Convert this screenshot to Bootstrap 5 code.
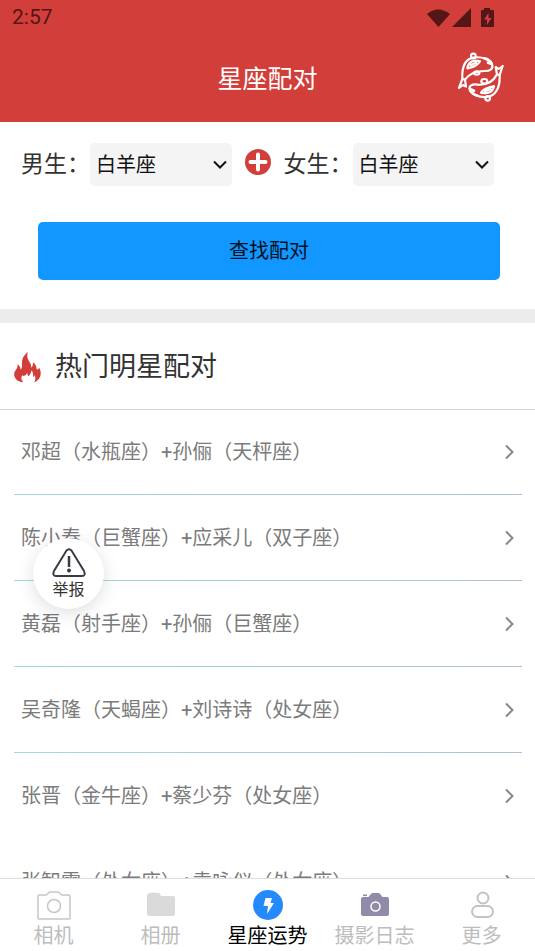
<!DOCTYPE html>
<html lang="zh-CN">
<head>
<meta charset="utf-8">
<meta name="viewport" content="width=device-width, initial-scale=1">
<title>星座配对</title>
<link href="https://cdn.jsdelivr.net/npm/bootstrap@5.3.0/dist/css/bootstrap.min.css" rel="stylesheet">
<style>
body { font-family: Roboto, "Noto Sans CJK SC", sans-serif; color: #333; background: #fff; }
.app-head { background: #d23e39; color: #fff; }
.status-bar { height: 36px; padding: 0 40px 0 12px; color: #541616; font-size: 21px; font-weight: 400; }
.title-bar { height: 86px; }
.title-bar h1 { font-size: 25px; font-weight: 400; line-height: 36px; padding-top: 2px; }
.sign-link { right: 31px; top: 16px; }
.match-form { padding: 21px 41px 29px 21px; }
.match-form label { font-size: 23px; line-height: 42px; padding-top: 1px; }
.sign-select { min-width: 0; height: 43px; padding: 0 32px 0 6px; border: 0; border-radius: 5px; font-size: 20px; line-height: 42px; color: #111; background-color: #f4f4f4; background-size: 14px 9px; background-position: right 5px center;
  background-image: url("data:image/svg+xml,%3Csvg xmlns='http://www.w3.org/2000/svg' viewBox='0 0 14 9'%3E%3Cpath d='M1 1.5l6 6 6-6' fill='none' stroke='%23111' stroke-width='2'/%3E%3C/svg%3E"); }
.plus-gap { margin: 0 13px; padding-bottom: 6px; }
.find-btn { margin: 36px -6px 0 17px; height: 58px; border: 0; border-radius: 5px; font-size: 20px; background: #1296ff; color: #001222; }
.divider-band { height: 14px; background: #ececec; }
.hot-head { height: 87px; padding: 2px 14px 0; gap: 14px; border-bottom: 1px solid #d4d4d4; }
.hot-head h2 { font-size: 27px; font-weight: 400; padding-top: 1px; }
.pair-list { margin-top: -1px; }
.pair-item { height: 86px; margin: 0 13px 0 14px; padding: 0 8px 0 7px; color: #7b7b7b; font-size: 20px; border-bottom: 1px solid; border-image: linear-gradient(90deg, #a3d9dc, #aebfd6) 1; }
.pair-item.plain { border-image: none; border-color: transparent; }
.report-btn { left: 33px; top: 538px; width: 71px; height: 71px; padding: 2px 0 0; border: 0; background: #fff; color: #333; font-size: 16px; line-height: 24px; box-shadow: 0 4px 18px rgba(0,0,0,.13); }
.tab-bar { height: 73px; border-top: 1px solid #ddd; background: #fff; }
.tab-bar a { color: #bdbdbd; font-size: 20px; line-height: 30px; padding-top: 10px; }
.tab-bar a.active { color: #000; }
.tab-bar svg { height: 32px; }
</style>
</head>
<body class="vh-100 d-flex flex-column overflow-hidden">
<header class="app-head flex-shrink-0">
  <div class="status-bar d-flex align-items-center justify-content-between">
    <span>2:57</span>
    <svg width="68" height="20" viewBox="0 0 68 20" fill="currentColor" aria-hidden="true">
      <path d="M0 6Q11-3 23 6L11.500 19ZM44 0V19H25ZM57 2v-2h6v2h3q1 0 1 1v15q0 1-1 1H55q-1 0-1-1V3q0-1 1-1z"/>
      <path d="M61.500 5L57 11.500h3V17l4.500-7h-3z" fill="#d23e39"/>
    </svg>
  </div>
  <div class="title-bar position-relative d-flex align-items-center justify-content-center">
    <h1 class="m-0">星座配对</h1>
    <a href="#" class="sign-link position-absolute" aria-label="双鱼座">
      <svg class="d-block" width="47" height="50" viewBox="50 36 141 150" fill="none" stroke="#fff" stroke-width="6.500" stroke-linejoin="round" stroke-linecap="round">
        <path d="M66 117C64 78 77 55 103 52C126 50 151 58 155 72C160 88 148 94 130 93C108 94 88 99 74 119L77 140L68 135L56 144Z"/>
        <path d="M66 117L74 119M81 85C84 64 101 58 119 64C112 77 99 80 81 85ZM91 75L107 68"/>
        <path d="M132 55Q148 58 154 72L143 68" stroke-width="8"/>
        <circle cx="99" cy="48" r="7"/><ellipse cx="109" cy="99" rx="8" ry="5"/>
        <path d="M178 105C180 142 166 168 140 171C116 174 92 162 88 149C85 138 95 131 112 134C140 136 159 125 170 103L166 81L175 87L187 78Z"/>
        <path d="M178 105L170 103M161 138C158 157 142 163 122 158C130 144 143 144 161 138ZM151 147L134 154"/>
        <path d="M111 167Q93 161 89 147L101 152" stroke-width="8"/>
        <circle cx="142" cy="175" r="7"/><ellipse cx="132" cy="124" rx="9" ry="7"/>
      </svg>
    </a>
  </div>
</header>

<main class="flex-fill overflow-hidden">
  <form class="match-form">
    <div class="d-flex align-items-center">
      <label class="text-nowrap" for="male">男生：</label>
      <select id="male" class="form-select sign-select"><option>白羊座</option></select>
      <svg class="plus-gap flex-shrink-0" width="26" height="32" viewBox="0 0 26 26" aria-hidden="true"><circle cx="13" cy="13" r="13" fill="#d23e39"/><path d="M13 5.500v15M5.500 13h15" stroke="#fff" stroke-width="4" stroke-linecap="round"/></svg>
      <label class="text-nowrap" for="female">女生：</label>
      <select id="female" class="form-select sign-select"><option>白羊座</option></select>
    </div>
    <div class="d-flex"><button type="button" class="btn find-btn flex-fill">查找配对</button></div>
  </form>
  <div class="divider-band"></div>
  <section>
    <div class="hot-head d-flex align-items-center">
      <svg width="27" height="31" viewBox="0 0 81 93" fill="#d23e39" aria-hidden="true"><path d="M42 0C36 16 43 25 49 34Q52 41 52 47Q58 42 57 31Q67 38 68 52Q72 54 76 47Q83 62 78 75Q73 87 60 91Q67 82 62 70Q60 75 57 74Q59 63 53 55Q49 70 43 73Q40 69 40 63Q32 76 25 70Q18 81 28 91Q8 89 2 75Q-3 62 8 50Q11 45 11 36Q19 43 20 53Q25 47 24 38Q22 13 42 0Z"/></svg>
      <h2 class="m-0">热门明星配对</h2>
    </div>
    <nav class="pair-list" aria-label="热门明星配对">
      <a href="#" class="pair-item d-flex align-items-center justify-content-between text-decoration-none"><span>邓超（水瓶座）+孙俪（天枰座）</span><svg width="10" height="16" viewBox="0 0 10 16" fill="none" stroke="#888" stroke-width="2"><path d="M2 1.500L8.500 8 2 14.500"/></svg></a>
      <a href="#" class="pair-item d-flex align-items-center justify-content-between text-decoration-none"><span>陈小春（巨蟹座）+应采儿（双子座）</span><svg width="10" height="16" viewBox="0 0 10 16" fill="none" stroke="#888" stroke-width="2"><path d="M2 1.500L8.500 8 2 14.500"/></svg></a>
      <a href="#" class="pair-item d-flex align-items-center justify-content-between text-decoration-none"><span>黄磊（射手座）+孙俪（巨蟹座）</span><svg width="10" height="16" viewBox="0 0 10 16" fill="none" stroke="#888" stroke-width="2"><path d="M2 1.500L8.500 8 2 14.500"/></svg></a>
      <a href="#" class="pair-item d-flex align-items-center justify-content-between text-decoration-none"><span>吴奇隆（天蝎座）+刘诗诗（处女座）</span><svg width="10" height="16" viewBox="0 0 10 16" fill="none" stroke="#888" stroke-width="2"><path d="M2 1.500L8.500 8 2 14.500"/></svg></a>
      <a href="#" class="pair-item plain d-flex align-items-center justify-content-between text-decoration-none"><span>张晋（金牛座）+蔡少芬（处女座）</span><svg width="10" height="16" viewBox="0 0 10 16" fill="none" stroke="#888" stroke-width="2"><path d="M2 1.500L8.500 8 2 14.500"/></svg></a>
      <a href="#" class="pair-item plain d-flex align-items-center justify-content-between text-decoration-none"><span>张智霖（处女座）+袁咏仪（处女座）</span><svg width="10" height="16" viewBox="0 0 10 16" fill="none" stroke="#888" stroke-width="2"><path d="M2 1.500L8.500 8 2 14.500"/></svg></a>
    </nav>
  </section>
</main>

<button type="button" class="report-btn position-absolute rounded-circle d-flex flex-column align-items-center justify-content-center">
  <svg width="34" height="30" viewBox="0 0 34 30" fill="none" stroke="#3a3a44" stroke-width="2" aria-hidden="true"><path d="M14.500 2.500Q17 0 19.500 2.500L32 23Q34 28 30 28H4Q0 28 2 23Z"/><path d="M17 8v11" stroke-width="2.500"/><circle cx="17" cy="22.500" r="1" /></svg>
  举报
</button>

<nav class="tab-bar row g-0 flex-shrink-0" aria-label="主导航">
  <a href="#" class="col d-flex flex-column align-items-center text-decoration-none">
    <svg width="34" viewBox="0 0 34 32" fill="none" stroke="#c6c6c6" stroke-width="1.500"><path d="M2 6h7q1 0 1.500-1L12 3.500Q12.500 3 13 3h8q.5 0 1 .5L23.500 5q.5 1 1.500 1h7q1 0 1 1v22q0 1-1 1H2q-1 0-1-1V7q0-1 1-1z"/><circle cx="17" cy="17" r="6.500"/></svg>
    相机</a>
  <a href="#" class="col d-flex flex-column align-items-center text-decoration-none">
    <svg width="30" viewBox="0 0 30 32" fill="#dadada"><path d="M3 4h2q3-1 6 0h2q1 0 2 3h12q2 0 2 2v16q0 2-2 2H3q-2 0-2-2V7q0-2 2-3z"/></svg>
    相册</a>
  <a href="#" class="active col d-flex flex-column align-items-center text-decoration-none" aria-current="page">
    <svg width="32" viewBox="0 0 32 32"><circle cx="16" cy="16" r="15" fill="#2489fd"/><path d="M13.500 9h6.500l-1.500 5h3.500l-7 11 1-8h-4.500z" fill="#fff"/></svg>
    星座运势</a>
  <a href="#" class="col d-flex flex-column align-items-center text-decoration-none">
    <svg width="30" viewBox="0 0 30 32"><path d="M3 8h5q1 0 2-2l1-1q.5-1 1.500-1h6q1 0 1.500 1l1 1q1 2 2 2h4q2 0 2 2v15q0 2-2 2H3q-2 0-2-2V10q0-2 2-2zM3 5.500h4v1.500H3z" fill="#918ba9"/><circle cx="15.500" cy="17.500" r="4.500" fill="none" stroke="#fff" stroke-width="1.500"/></svg>
    摄影日志</a>
  <a href="#" class="col d-flex flex-column align-items-center text-decoration-none">
    <svg width="30" viewBox="0 0 30 32" fill="none" stroke="#c3c3c3" stroke-width="2"><circle cx="16" cy="9" r="5.500"/><rect x="5" y="17" width="21" height="11" rx="5.500"/></svg>
    更多</a>
</nav>
<script src="https://cdn.jsdelivr.net/npm/bootstrap@5.3.0/dist/js/bootstrap.bundle.min.js"></script>
</body>
</html>
